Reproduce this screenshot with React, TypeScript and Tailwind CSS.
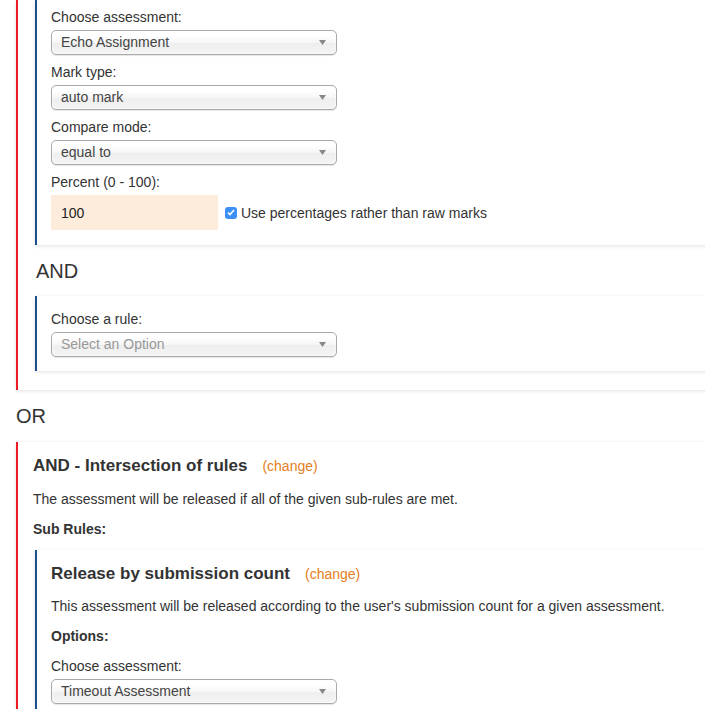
import React from 'react';

function Select({ value, placeholder }: { value: string; placeholder?: boolean }) {
  return (
    <div className="flex h-[25px] w-[286px] items-center rounded-[5px] border border-[#aaa] bg-[linear-gradient(#fff_20%,#f6f6f6_50%,#eee_52%,#f4f4f4_100%)] pb-[1px] pl-[9px] shadow-[inset_0_0_3px_#fff,0_1px_1px_rgba(0,0,0,0.1)]">
      <span className={placeholder ? 'flex-1 text-[#999]' : 'flex-1 text-[#444]'}>
        {value}
      </span>
      <svg className="mr-[10px]" width="7" height="5" viewBox="0 0 7 5">
        <path d="M0 0h7L3.5 5z" fill="#888" />
      </svg>
    </div>
  );
}

function Field({ label, children }: { label: string; children: React.ReactNode }) {
  return (
    <div>
      <div className="mb-[3px]">{label}</div>
      {children}
    </div>
  );
}

function Title({ text }: { text: string }) {
  return (
    <div className="text-[17px] font-bold leading-5">
      {text}
      <span className="ml-[15px] text-[14px] font-normal text-[#e67e22]">(change)</span>
    </div>
  );
}

const card = 'bg-white shadow-[0_1px_4px_rgba(0,0,0,0.12)]';

export default function App() {
  return (
    <div className="h-[709px] w-[705px] overflow-hidden bg-white pl-4 font-['Liberation_Sans',Arial,sans-serif] text-[14px] leading-5 text-[#333]">
      {/* first OR branch, scrolled so its top is cut off */}
      <div className={`w-[760px] border-l-2 border-[#ed1c24] pb-[19px] pl-[15px] ${card}`}>
        <div className={`ml-[2px] flex flex-col gap-[7px] border-l-2 border-[#1b4f8c] pb-[15px] pl-[14px] pt-[7px] ${card}`}>
          <Field label="Choose assessment:">
            <Select value="Echo Assignment" />
          </Field>
          <Field label="Mark type:">
            <Select value="auto mark" />
          </Field>
          <Field label="Compare mode:">
            <Select value="equal to" />
          </Field>
          <Field label="Percent (0 - 100):">
            <div className="flex items-center">
              <div className="flex h-[35px] w-[167px] items-center bg-[#fdecdc] pl-[10px] text-[#222]">
                100
              </div>
              <span className="ml-[7px] mr-[4px] flex h-[12px] w-[12px] items-center justify-center rounded-[3px] bg-[#3b8ff6]">
                <svg width="8" height="7" viewBox="0 0 8 7">
                  <path d="M1 3.6l2 2L7 1" fill="none" stroke="#fff" strokeWidth="1.6" />
                </svg>
              </span>
              <span>Use percentages rather than raw marks</span>
            </div>
          </Field>
        </div>

        <h3 className="mb-[14px] mt-[15px] pl-[3px] text-[20px] leading-[22px]">AND</h3>

        <div className={`ml-[2px] border-l-2 border-[#1b4f8c] pb-[14px] pl-[14px] pt-[13px] ${card}`}>
          <Field label="Choose a rule:">
            <Select value="Select an Option" placeholder />
          </Field>
        </div>
      </div>

      <h3 className="my-[15px] text-[20px] leading-[22px]">OR</h3>

      {/* second OR branch */}
      <div className={`w-[760px] border-l-2 border-[#ed1c24] pb-[19px] pl-[15px] pt-[14px] ${card}`}>
        <div className="mb-[13px]">
          <Title text="AND - Intersection of rules" />
        </div>
        <p className="mb-[10px]">The assessment will be released if all of the given sub-rules are met.</p>
        <p className="mb-[11px] font-bold">Sub Rules:</p>

        <div className={`ml-[2px] border-l-2 border-[#1b4f8c] pb-[15px] pl-[14px] pt-[14px] ${card}`}>
          <div className="mb-[12px]">
            <Title text="Release by submission count" />
          </div>
          <p className="mb-[10px]">
            This assessment will be released according to the user's submission count for a given assessment.
          </p>
          <p className="mb-[10px] font-bold">Options:</p>
          <Field label="Choose assessment:">
            <Select value="Timeout Assessment" />
          </Field>
        </div>
      </div>
    </div>
  );
}
